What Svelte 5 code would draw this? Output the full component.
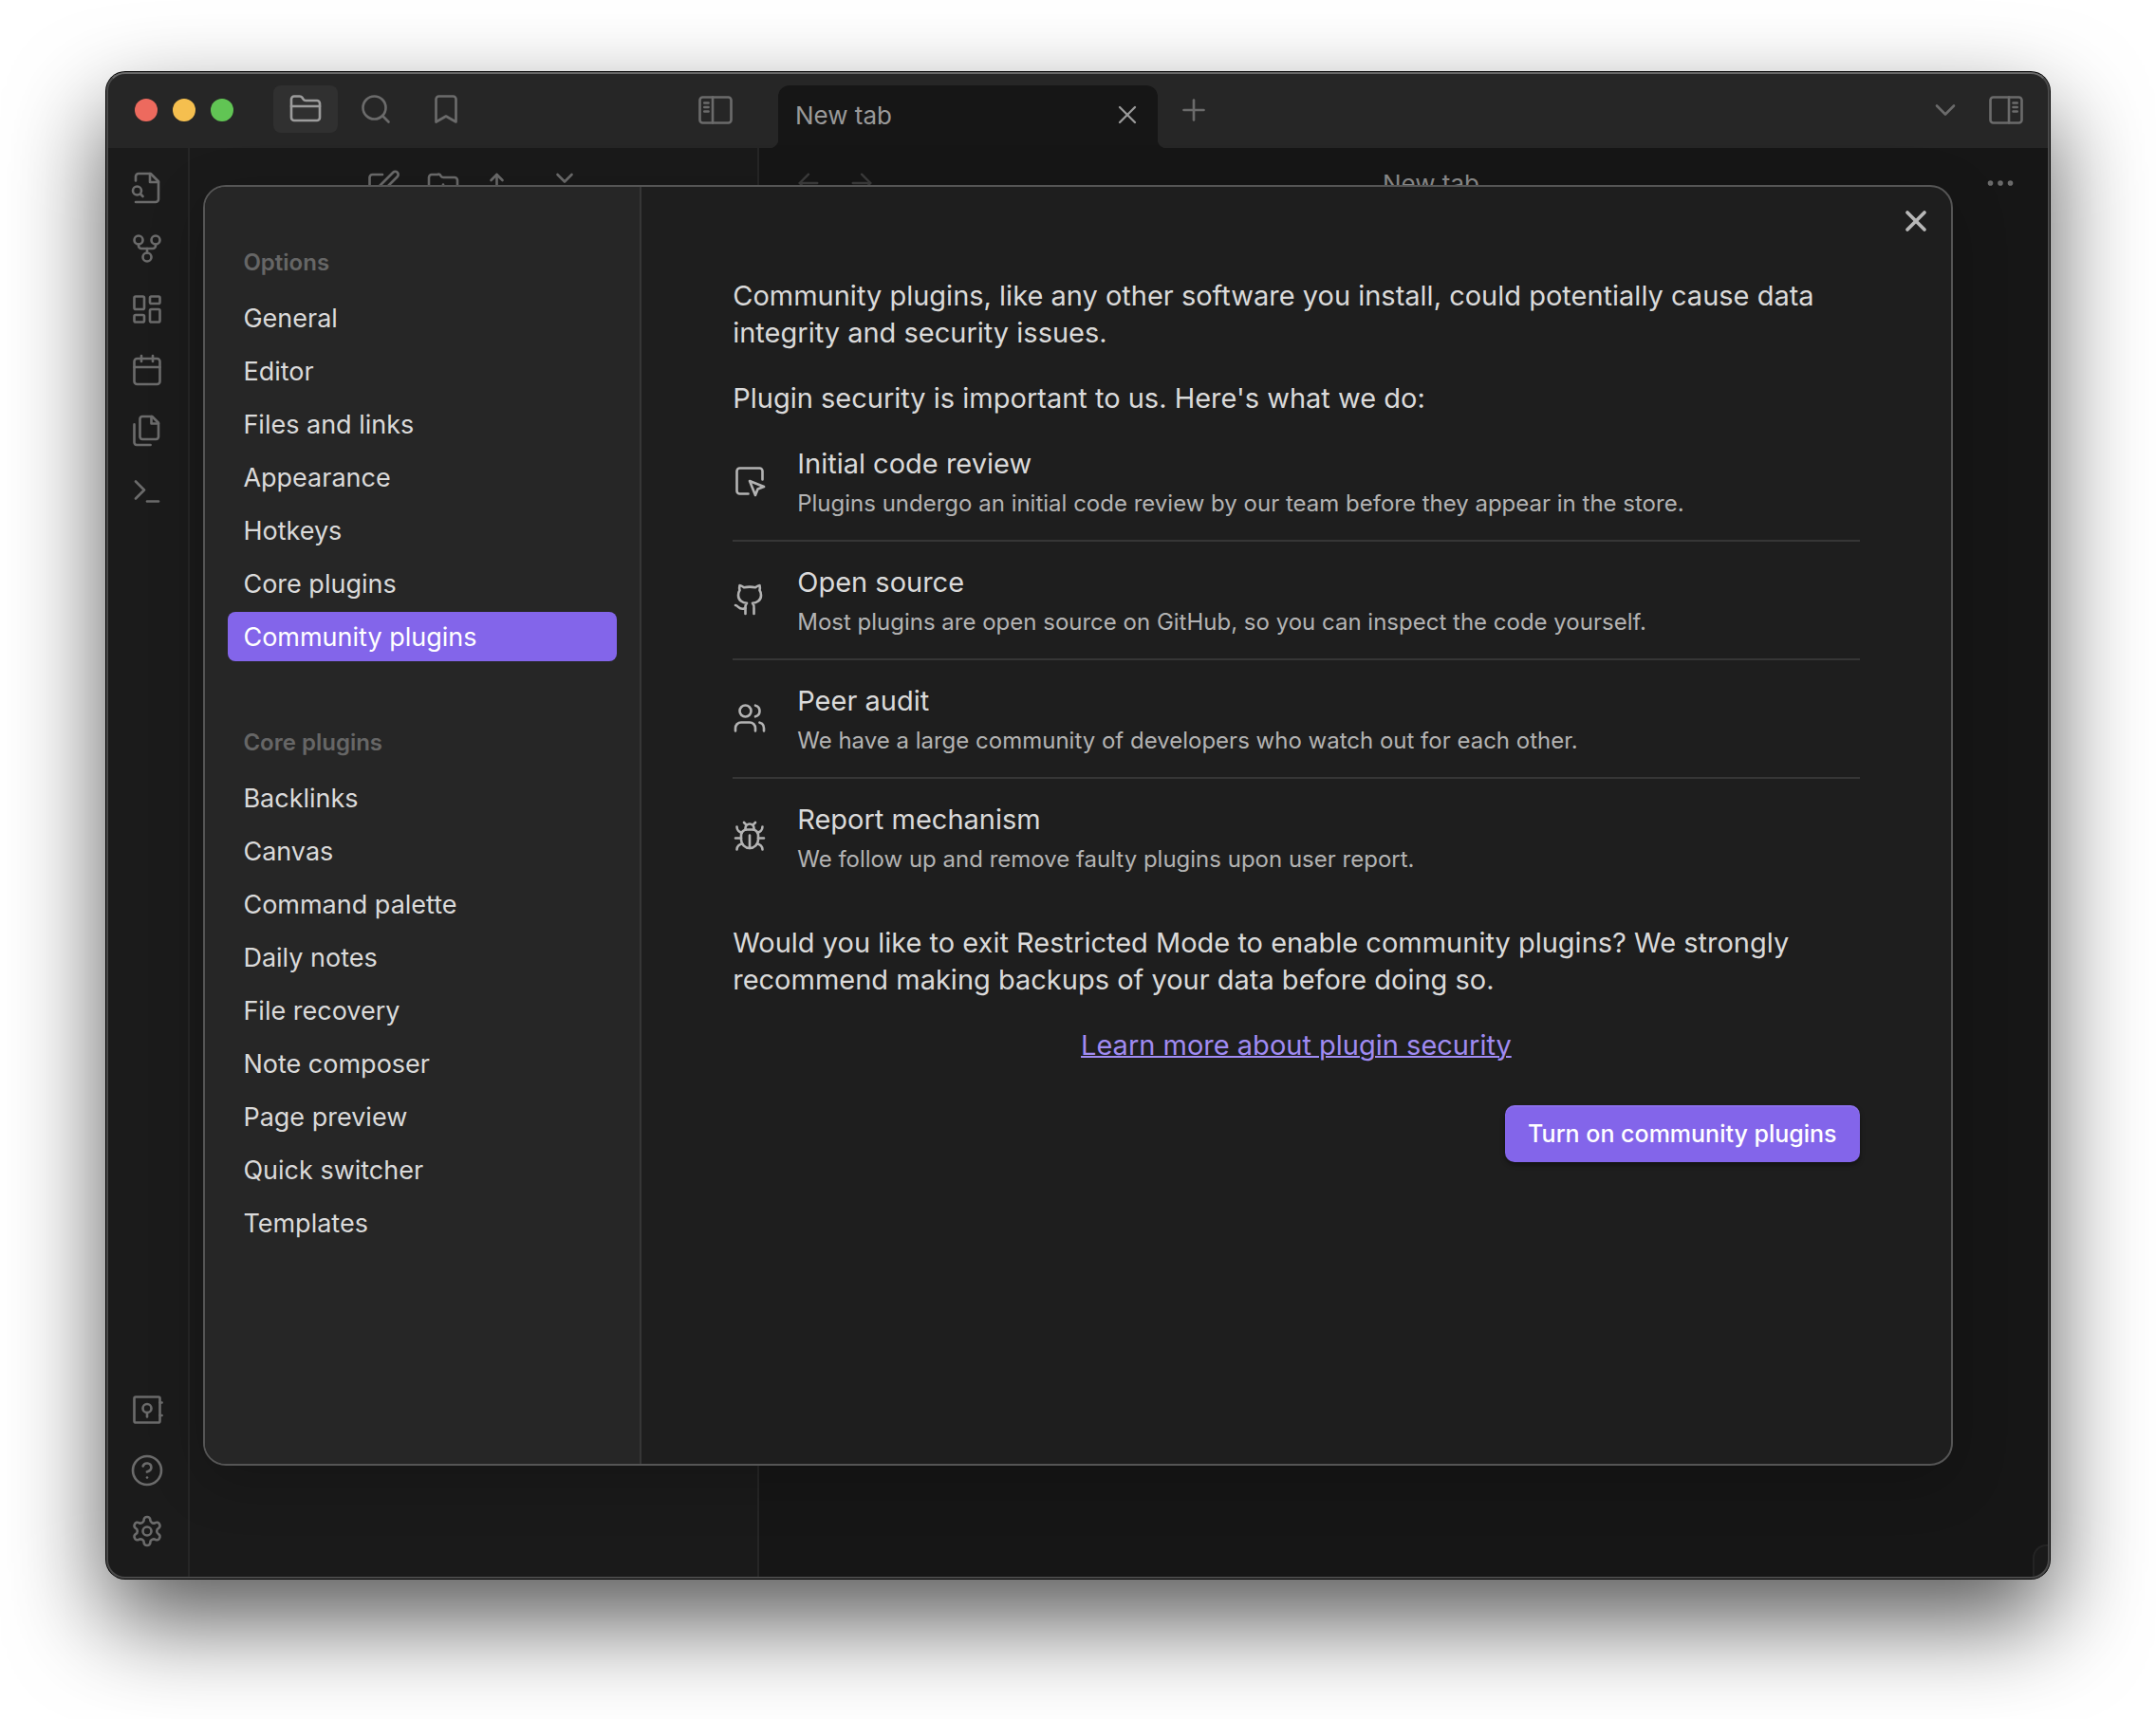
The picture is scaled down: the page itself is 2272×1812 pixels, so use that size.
<script>
  const icons = {
    folder:
      '<path d="M20 20a2 2 0 0 0 2-2V8a2 2 0 0 0-2-2h-7.9a2 2 0 0 1-1.69-.9L9.6 3.9A2 2 0 0 0 7.93 3H4a2 2 0 0 0-2 2v13a2 2 0 0 0 2 2Z"/><path d="M2 10h20"/>',
    search: '<circle cx="11" cy="11" r="8"/><path d="m21 21-4.3-4.3"/>',
    bookmark: '<path d="m19 21-7-4-7 4V5a2 2 0 0 1 2-2h10a2 2 0 0 1 2 2v16z"/>',
    sidebarLeft:
      '<rect x="1" y="3" width="22" height="18" rx="2"/><path d="M10 3v18"/><path d="M4.2 7h2.8M4.2 10h2.8M4.2 13h2.8"/>',
    sidebarRight:
      '<rect x="1" y="3" width="22" height="18" rx="2"/><path d="M14 3v18"/><path d="M17 7h2.8M17 10h2.8M17 13h2.8"/>',
    close: '<path d="M18 6 6 18"/><path d="m6 6 12 12"/>',
    plus: '<path d="M12 5v14"/><path d="M5 12h14"/>',
    chevronDown: '<path d="m6 9 6 6 6-6"/>',
    fileSearch:
      '<path d="M4 22h14a2 2 0 0 0 2-2V7.5L14.5 2H6a2 2 0 0 0-2 2v3"/><path d="M14 2v6h6"/><circle cx="5" cy="14" r="3"/><path d="m9 18-1.5-1.5"/>',
    fork: '<circle cx="12" cy="18" r="3"/><circle cx="6" cy="6" r="3"/><circle cx="18" cy="6" r="3"/><path d="M18 9v1a2 2 0 0 1-2 2H8a2 2 0 0 1-2-2V9"/><path d="M12 12v3"/>',
    dashboard:
      '<rect x="3" y="3" width="7" height="9" rx="1"/><rect x="14" y="3" width="7" height="5" rx="1"/><rect x="14" y="12" width="7" height="9" rx="1"/><rect x="3" y="16" width="7" height="5" rx="1"/>',
    calendar:
      '<rect x="3" y="4" width="18" height="18" rx="2"/><path d="M16 2v4"/><path d="M8 2v4"/><path d="M3 10h18"/>',
    files:
      '<path d="M15.5 2H8.6c-.4 0-.8.2-1.1.5-.3.3-.5.7-.5 1.1v12.8c0 .4.2.8.5 1.1.3.3.7.5 1.1.5h9.8c.4 0 .8-.2 1.1-.5.3-.3.5-.7.5-1.1V6.5L15.5 2z"/><path d="M3 7.6v12.8c0 .4.2.8.5 1.1.3.3.7.5 1.1.5h9.8"/><path d="M15 2v5h5"/>',
    terminal: '<path d="m4 17 6-6-6-6"/><path d="M12 19h8"/>',
    vault:
      '<rect x="3" y="3" width="18" height="18" rx="1"/><circle cx="12" cy="11" r="3"/><path d="M12 14v3"/><path d="M21 7h1.4M21 16h1.4"/>',
    help: '<circle cx="12" cy="12" r="10"/><path d="M9.09 9a3 3 0 0 1 5.83 1c0 2-3 3-3 3"/><path d="M12 17h.01"/>',
    settings:
      '<path d="M12.22 2h-.44a2 2 0 0 0-2 2v.18a2 2 0 0 1-1 1.73l-.43.25a2 2 0 0 1-2 0l-.15-.08a2 2 0 0 0-2.73.73l-.22.38a2 2 0 0 0 .73 2.73l.15.1a2 2 0 0 1 1 1.72v.51a2 2 0 0 1-1 1.74l-.15.09a2 2 0 0 0-.73 2.73l.22.38a2 2 0 0 0 2.73.73l.15-.08a2 2 0 0 1 2 0l.43.25a2 2 0 0 1 1 1.73V20a2 2 0 0 0 2 2h.44a2 2 0 0 0 2-2v-.18a2 2 0 0 1 1-1.73l.43-.25a2 2 0 0 1 2 0l.15.08a2 2 0 0 0 2.73-.73l.22-.39a2 2 0 0 0-.73-2.73l-.15-.08a2 2 0 0 1-1-1.74v-.5a2 2 0 0 1 1-1.74l.15-.09a2 2 0 0 0 .73-2.73l-.22-.38a2 2 0 0 0-2.73-.73l-.15.08a2 2 0 0 1-2 0l-.43-.25a2 2 0 0 1-1-1.73V4a2 2 0 0 0-2-2z"/><circle cx="12" cy="12" r="3"/>',
    edit: '<path d="M11 4H4a2 2 0 0 0-2 2v14a2 2 0 0 0 2 2h14a2 2 0 0 0 2-2v-7" transform="translate(1)"/><path d="M18.5 2.5a2.12 2.12 0 0 1 3 3L12 15l-4 1 1-4Z" transform="translate(1)"/>',
    folderPlus:
      '<path d="M4 20h16a2 2 0 0 0 2-2V8a2 2 0 0 0-2-2h-7.93a2 2 0 0 1-1.66-.9l-.82-1.2A2 2 0 0 0 7.93 4H4a2 2 0 0 0-2 2v12a2 2 0 0 0 2 2Z"/><path d="M12 11v6"/><path d="M9 14h6"/>',
    sort: '<path d="m3 8 4-4 4 4"/><path d="M7 4v16"/><path d="M11 14h4M11 17h7M11 20h10"/>',
    collapse: '<path d="m7 20 5-5 5 5"/><path d="m7 4 5 5 5-5"/>',
    arrowLeft: '<path d="m12 19-7-7 7-7"/><path d="M19 12H5"/>',
    arrowRight: '<path d="M5 12h14"/><path d="m12 5 7 7-7 7"/>',
    more: '<circle cx="12" cy="12" r="1"/><circle cx="19" cy="12" r="1"/><circle cx="5" cy="12" r="1"/>',
    review:
      '<path d="M21 11V5a2 2 0 0 0-2-2H5a2 2 0 0 0-2 2v14a2 2 0 0 0 2 2h6"/><path d="m12 12 4 10 1.7-4.3L22 16Z"/>',
    github:
      '<path d="M15 22v-4a4.8 4.8 0 0 0-1-3.5c3 0 6-2 6-5.5.08-1.25-.27-2.48-1-3.5.28-1.15.28-2.35 0-3.5 0 0-1 0-3 1.5-2.64-.5-5.36-.5-8 0C6 2 5 2 5 2c-.3 1.15-.3 2.35 0 3.5A5.403 5.403 0 0 0 4 9c0 3.5 3 5.5 6 5.5-.39.49-.68 1.05-.85 1.65-.17.6-.22 1.23-.15 1.85v4"/><path d="M9 18c-4.51 2-5-2-7-2"/>',
    users:
      '<path d="M16 21v-2a4 4 0 0 0-4-4H6a4 4 0 0 0-4 4v2"/><circle cx="9" cy="7" r="4"/><path d="M22 21v-2a4 4 0 0 0-3-3.87"/><path d="M16 3.13a4 4 0 0 1 0 7.75"/>',
    bug: '<path d="m8 2 1.88 1.88M14.12 3.88 16 2M9 7.13v-1a3.003 3.003 0 1 1 6 0v1"/><path d="M12 20c-3.3 0-6-2.7-6-6v-3a4 4 0 0 1 4-4h4a4 4 0 0 1 4 4v3c0 3.3-2.7 6-6 6"/><path d="M12 20v-9M6.53 9C4.6 8.8 3 7.1 3 5M6 13H2M3 21c0-2.1 1.7-3.9 3.8-4M20.97 5c0 2.1-1.6 3.8-3.5 4M22 13h-4M17.2 17c2.1.1 3.8 1.9 3.8 4"/>',
  };

  const ribbonTop = [
    ['fileSearch', 'Open quick switcher'],
    ['fork', 'Open graph view'],
    ['dashboard', 'Create new canvas'],
    ['calendar', "Open today's daily note"],
    ['files', 'Insert template'],
    ['terminal', 'Open command palette'],
  ];
  const ribbonBottom = [
    ['vault', 'Open another vault'],
    ['help', 'Help'],
    ['settings', 'Settings'],
  ];
  const explorerActions = [
    ['edit', 'New note'],
    ['folderPlus', 'New folder'],
    ['sort', 'Change sort order'],
    ['collapse', 'Collapse all'],
  ];

  const groups = [
    {
      title: 'Options',
      items: ['General', 'Editor', 'Files and links', 'Appearance', 'Hotkeys', 'Core plugins', 'Community plugins'],
    },
    {
      title: 'Core plugins',
      items: [
        'Backlinks',
        'Canvas',
        'Command palette',
        'Daily notes',
        'File recovery',
        'Note composer',
        'Page preview',
        'Quick switcher',
        'Templates',
      ],
    },
  ];
  let active = $state('Options/Community plugins');

  const measures = [
    ['review', 'Initial code review', 'Plugins undergo an initial code review by our team before they appear in the store.'],
    ['github', 'Open source', 'Most plugins are open source on GitHub, so you can inspect the code yourself.'],
    ['users', 'Peer audit', 'We have a large community of developers who watch out for each other.'],
    ['bug', 'Report mechanism', 'We follow up and remove faulty plugins upon user report.'],
  ];
</script>

{#snippet icon(name, size = '')}
  <svg class="icon {size}" viewBox="0 0 24 24" aria-hidden="true">{@html icons[name]}</svg>
{/snippet}

<div class="desktop">
  <div class="window">
    <header class="titlebar">
      <div class="titlebar-left">
        <div class="lights">
          <span class="light red"></span>
          <span class="light yellow"></span>
          <span class="light green"></span>
        </div>
        <div class="side-tabs">
          <button class="tool current" aria-label="Files">{@render icon('folder')}</button>
          <button class="tool" aria-label="Search">{@render icon('search')}</button>
          <button class="tool" aria-label="Bookmarks">{@render icon('bookmark')}</button>
        </div>
        <button class="tool push" aria-label="Collapse left sidebar">{@render icon('sidebarLeft')}</button>
      </div>
      <div class="tabs">
        <div class="tab">
          <span>New tab</span>
          <button class="bare" aria-label="Close tab">{@render icon('close', 'small')}</button>
        </div>
        <button class="bare new-tab" aria-label="Open new tab">{@render icon('plus')}</button>
      </div>
      <div class="titlebar-right">
        <button class="bare" aria-label="Tab list">{@render icon('chevronDown')}</button>
        <button class="bare" aria-label="Expand right sidebar">{@render icon('sidebarRight')}</button>
      </div>
    </header>

    <div class="workspace">
      <nav class="ribbon" aria-label="Ribbon">
        {#each ribbonTop as [name, label]}
          <button class="bare ribbon-btn" aria-label={label}>{@render icon(name)}</button>
        {/each}
        <span class="spacer"></span>
        {#each ribbonBottom as [name, label]}
          <button class="bare ribbon-btn" aria-label={label}>{@render icon(name)}</button>
        {/each}
      </nav>
      <aside class="explorer">
        <div class="explorer-tools">
          {#each explorerActions as [name, label]}
            <button class="bare" aria-label={label}>{@render icon(name)}</button>
          {/each}
        </div>
      </aside>
      <main class="view">
        <div class="view-header">
          <button class="bare wide faint" aria-label="Back">{@render icon('arrowLeft', 'small')}</button>
          <button class="bare wide faint" aria-label="Forward">{@render icon('arrowRight', 'small')}</button>
          <span class="view-title">New tab</span>
          <button class="bare wide" aria-label="More options">{@render icon('more')}</button>
        </div>
      </main>
    </div>
    <div class="status"></div>

    <div class="modal" role="dialog" aria-label="Settings">
      <nav class="settings-nav" aria-label="Settings sections">
        {#each groups as group}
          <section class="group">
            <h2>{group.title}</h2>
            {#each group.items as item}
              {@const id = group.title + '/' + item}
              <button class="nav-item" class:selected={active === id} onclick={() => (active = id)}>{item}</button>
            {/each}
          </section>
        {/each}
      </nav>
      <div class="pane">
        <p>
          Community plugins, like any other software you install, could potentially cause data integrity and security
          issues.
        </p>
        <p>Plugin security is important to us. Here's what we do:</p>
        <ul class="measures">
          {#each measures as [name, title, text]}
            <li>
              {@render icon(name)}
              <div>
                <h3>{title}</h3>
                <div class="desc">{text}</div>
              </div>
            </li>
          {/each}
        </ul>
        <p>
          Would you like to exit Restricted Mode to enable community plugins? We strongly recommend making backups of
          your data before doing so.
        </p>
        <p class="center"><a href="#plugin-security">Learn more about plugin security</a></p>
        <div class="actions"><button class="cta">Turn on community plugins</button></div>
      </div>
      <button class="bare modal-close" aria-label="Close">{@render icon('close', 'bold')}</button>
    </div>
    <div class="rim"></div>
  </div>
</div>

<style>
  :global(body) {
    background: #fff;
  }
  * {
    box-sizing: border-box;
  }
  .desktop {
    display: flex;
    min-height: 100vh;
    padding: 76px 112px 148px;
    overflow: hidden;
    font-family: Inter, 'Liberation Sans', sans-serif;
    font-size: 29px;
    line-height: 39px;
    color: #dadada;
  }
  .window {
    position: relative;
    flex: 1;
    display: flex;
    flex-direction: column;
    border-radius: 20px;
    background: #161616;
    box-shadow:
      0 0 0 1px #000,
      0 44px 100px rgba(0, 0, 0, 0.66);
  }
  .rim {
    position: absolute;
    inset: 0;
    border: 2px solid #4a4a4a;
    border-top-color: #686868;
    border-radius: 20px;
    pointer-events: none;
  }
  button {
    display: flex;
    align-items: center;
    justify-content: center;
    margin: 0;
    padding: 0;
    border: 0;
    background: none;
    color: inherit;
    font: inherit;
  }
  .icon {
    display: block;
    flex: none;
    width: 36px;
    height: 36px;
    fill: none;
    stroke: currentColor;
    stroke-width: 1.75;
    stroke-linecap: round;
    stroke-linejoin: round;
  }
  .icon.small {
    width: 32px;
    height: 32px;
  }
  .icon.bold {
    stroke-width: 2.5;
  }

  .titlebar {
    display: flex;
    height: 80px;
    border-radius: 20px 20px 0 0;
    background: #262626;
    color: #6b6b6b;
  }
  .titlebar-left {
    display: flex;
    align-items: center;
    width: 688px;
    padding: 0 12px 0 30px;
  }
  .lights {
    display: flex;
    gap: 16px;
    margin-right: 42px;
  }
  .light {
    width: 24px;
    height: 24px;
    border-radius: 50%;
  }
  .red {
    background: #ed6a5e;
  }
  .yellow {
    background: #f5bf4f;
  }
  .green {
    background: #61c554;
  }
  .side-tabs {
    display: flex;
    gap: 6px;
    padding-bottom: 2px;
  }
  .tool {
    width: 68px;
    height: 50px;
    border-radius: 8px;
  }
  .current {
    background: #303030;
    color: #9c9c9c;
  }
  .push {
    margin-left: auto;
  }
  .tabs {
    flex: 1;
    display: flex;
    align-items: flex-end;
    padding-left: 20px;
  }
  .tab {
    position: relative;
    display: flex;
    align-items: center;
    justify-content: space-between;
    width: 400px;
    height: 66px;
    padding: 0 16px 4px 18px;
    border-radius: 12px 12px 0 0;
    background: #161616;
    color: #999;
    font-size: 26px;
  }
  .tab::before,
  .tab::after {
    content: '';
    position: absolute;
    bottom: 0;
    width: 10px;
    height: 10px;
  }
  .tab::before {
    right: 100%;
    background: radial-gradient(circle at 0 0, transparent 10px, #161616 11px);
  }
  .tab::after {
    left: 100%;
    background: radial-gradient(circle at 100% 0, transparent 10px, #161616 11px);
  }
  .new-tab {
    margin: 0 0 22px 20px;
  }
  .titlebar-right {
    display: flex;
    align-items: center;
    gap: 28px;
    padding-right: 28px;
  }

  .workspace {
    flex: 1;
    display: flex;
    color: #6b6b6b;
  }
  .ribbon {
    display: flex;
    flex-direction: column;
    align-items: center;
    gap: 16px;
    width: 88px;
    padding: 18px 0 26px;
    border-right: 2px solid #262626;
    border-bottom-left-radius: 20px;
    background: #1b1b1b;
  }
  .ribbon-btn {
    width: 48px;
    height: 48px;
  }
  .spacer {
    flex: 1;
  }
  .explorer {
    width: 600px;
    border-right: 2px solid #262626;
    background: #1a1a1a;
  }
  .explorer-tools {
    display: flex;
    align-items: center;
    justify-content: center;
    gap: 28px;
    height: 80px;
  }
  .view {
    flex: 1;
  }
  .view-header {
    display: flex;
    align-items: center;
    height: 74px;
    padding: 0 24px;
    font-size: 26px;
  }
  .wide {
    width: 56px;
    height: 56px;
  }
  .faint {
    color: #3c3c3c;
  }
  .view-title {
    flex: 1;
    text-align: center;
    color: #8c8c8c;
  }
  .status {
    position: absolute;
    right: 0;
    bottom: 0;
    width: 18px;
    height: 36px;
    border: 2px solid #242424;
    border-width: 2px 0 0 2px;
    border-radius: 16px 0 20px 0;
    background: #1a1a1a;
  }

  .modal {
    position: absolute;
    inset: 0;
    display: flex;
    width: 90%;
    height: 85%;
    margin: auto;
    border: 2px solid #555;
    border-radius: 24px;
    background: #1e1e1e;
    overflow: hidden;
    box-shadow: 0 16px 60px rgba(0, 0, 0, 0.2);
  }
  .settings-nav {
    display: flex;
    flex-direction: column;
    gap: 66px;
    width: 25%;
    padding: 60px 24px 0;
    border-right: 2px solid #363636;
    background: #262626;
  }
  .group {
    display: flex;
    flex-direction: column;
    gap: 4px;
  }
  h2 {
    margin: 0;
    padding: 2px 16px 10px;
    color: #666;
    font-size: 24px;
    line-height: 36px;
    font-weight: 600;
  }
  .nav-item {
    justify-content: flex-start;
    height: 52px;
    padding: 0 16px;
    border-radius: 8px;
    font-size: 27px;
  }
  .selected {
    background: #8365ea;
    color: #fff;
  }
  .pane {
    flex: 1;
    padding: 95px 96px 0;
  }
  p {
    margin: 0 0 30px;
  }
  .measures {
    margin: 0 0 30px;
    padding: 0;
    list-style: none;
  }
  .measures li {
    display: flex;
    align-items: center;
    gap: 32px;
    padding: 23px 0 20px;
    border-bottom: 2px solid #363636;
  }
  .measures li:first-child {
    padding-top: 0;
  }
  .measures li:last-child {
    border-bottom: 0;
  }
  .measures .icon {
    margin-bottom: 4px;
    color: #b3b3b3;
  }
  h3 {
    margin: 0 0 4px;
    font-size: 29px;
    line-height: 40px;
    font-weight: 400;
  }
  .desc {
    color: #b3b3b3;
    font-size: 24px;
    line-height: 36px;
  }
  .center {
    text-align: center;
  }
  a {
    color: #a08bf2;
    text-decoration-thickness: 2px;
  }
  .actions {
    display: flex;
    justify-content: flex-end;
    padding-top: 14px;
  }
  .cta {
    height: 60px;
    padding: 0 24px;
    border-radius: 10px;
    background: #8365ea;
    box-shadow:
      inset 0 2px 0 rgba(255, 255, 255, 0.07),
      0 3px 5px rgba(0, 0, 0, 0.4);
    color: #fff;
    font-size: 25px;
    font-weight: 500;
  }
  .modal-close {
    position: absolute;
    top: 18px;
    right: 19px;
    color: #b8b8b8;
  }
</style>
